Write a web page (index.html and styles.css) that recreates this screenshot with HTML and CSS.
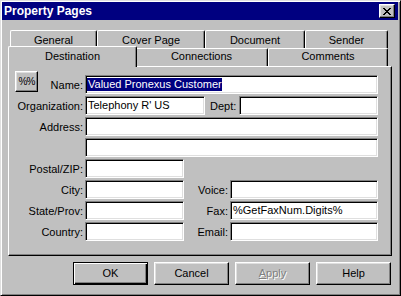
FILE: index.html
```html
<!DOCTYPE html>
<html lang="en">
  <head>
    <meta charset="UTF-8" />
    <meta name="viewport" content="width=device-width, initial-scale=1.0" />
    <title>Property Pages</title>
    <link rel="stylesheet" href="styles.css">
  </head>
  <body>
    <div class="window">
      <div class="titlebar">
        <span class="title">Property Pages</span>
        <button type="button" class="close">
          <svg width="8" height="7" viewBox="0 0 8 7">
            <path fill="#000" d="M0 0h2v1H0z M6 0h2v1H6z M1 1h2v1H1z M5 1h2v1H5z M2 2h4v1H2z M3 3h2v1H3z M2 4h4v1H2z M1 5h2v1H1z M5 5h2v1H5z M0 6h2v1H0z M6 6h2v1H6z" />
          </svg>
        </button>
      </div>

      <div class="tabs">
        <div class="tab_row tab_row_back">
          <div class="tab">General</div>
          <div class="tab">Cover Page</div>
          <div class="tab">Document</div>
          <div class="tab">Sender</div>
        </div>
        <div class="tab_row tab_row_front">
          <div class="tab tab_active">Destination</div>
          <div class="tab">Connections</div>
          <div class="tab">Comments</div>
        </div>
      </div>

      <div class="panel">
        <div class="form">
          <div class="row">
            <button type="button" class="macro">%%</button>
            <span class="label label_name">Name:</span>
            <div class="field"><span class="selected">Valued Pronexus Customer</span></div>
          </div>
          <div class="row">
            <span class="label">Organization:</span>
            <div class="field field_org">Telephony R' US</div>
            <span class="label_dept">Dept:</span>
            <div class="field"></div>
          </div>
          <div class="row">
            <span class="label">Address:</span>
            <div class="field"></div>
          </div>
          <div class="row">
            <span class="label"></span>
            <div class="field"></div>
          </div>
          <div class="row">
            <span class="label">Postal/ZIP:</span>
            <div class="field field_small"></div>
          </div>
          <div class="row">
            <span class="label">City:</span>
            <div class="field field_small"></div>
            <span class="label_right">Voice:</span>
            <div class="field"></div>
          </div>
          <div class="row">
            <span class="label">State/Prov:</span>
            <div class="field field_small"></div>
            <span class="label_right">Fax:</span>
            <div class="field">%GetFaxNum.Digits%</div>
          </div>
          <div class="row">
            <span class="label">Country:</span>
            <div class="field field_small"></div>
            <span class="label_right">Email:</span>
            <div class="field"></div>
          </div>
        </div>
      </div>

      <div class="buttons">
        <button type="button" class="btn btn_default">OK</button>
        <button type="button" class="btn">Cancel</button>
        <button type="button" class="btn btn_disabled"><u>A</u>pply</button>
        <button type="button" class="btn">Help</button>
      </div>
    </div>
  </body>
</html>
```

FILE: styles.css
```css
* {
  box-sizing: border-box;
}
body {
  margin: 0;
  background: #c0c0c0;
  font-family: "Liberation Sans", Arial, sans-serif;
  font-size: 11px;
  color: #000;
}
button {
  font: inherit;
  color: inherit;
  margin: 0;
  padding: 0;
}
.window {
  width: 401px;
  height: 296px;
  background: #c0c0c0;
  border: 1px solid;
  border-color: #dfdfdf #000 #000 #dfdfdf;
  box-shadow: inset 1px 1px #fff, inset -1px -1px #808080;
  padding: 1px;
}

/* title bar */
.titlebar {
  height: 18px;
  margin-right: 1px;
  padding: 0 3px 0 2px;
  background: #000080;
  color: #fff;
  display: flex;
  align-items: center;
  justify-content: space-between;
}
.title {
  font-size: 12px;
  font-weight: bold;
}
.close {
  width: 16px;
  height: 14px;
  display: flex;
  align-items: center;
  justify-content: center;
  padding-right: 1px;
  background: #c0c0c0;
  border: 1px solid;
  border-color: #fff #000 #000 #fff;
  box-shadow: inset -1px -1px #808080, inset 1px 1px #dfdfdf;
}
.close svg {
  shape-rendering: crispEdges;
}

/* tabs */
.tabs {
  margin: 10px 0 0 8px;
  width: 378px;
}
.tab_row {
  display: grid;
  height: 18px;
}
.tab_row_back {
  grid-template-columns: 87px 108px 100px 83px;
}
.tab_row_front {
  grid-template-columns: 125px 133px 120px;
}
.tab {
  background: #c0c0c0;
  border-top: 1px solid #fff;
  border-left: 1px solid #fff;
  border-right: 1px solid #000;
  border-top-left-radius: 2px;
  border-top-right-radius: 2px;
  box-shadow: inset -1px 0 #808080;
  text-align: center;
  line-height: 13px;
  padding-top: 3px;
  white-space: nowrap;
}
.tab_row_front .tab {
  padding-top: 1px;
}
.tab_row_front .tab_active {
  position: relative;
  z-index: 1;
  margin: -2px -2px -1px;
  padding-top: 3px;
}

/* page */
.panel {
  margin-left: 6px;
  width: 384px;
  height: 190px;
  border: 1px solid;
  border-color: #fff #000 #000 #fff;
  box-shadow: inset -1px -1px #808080;
}
.form {
  display: flex;
  flex-direction: column;
  gap: 2px;
  padding: 8px 13px 0 0;
}
.row {
  display: flex;
  align-items: center;
  height: 19px;
}
.label {
  flex: none;
  width: 74px;
  margin-right: 2px;
  text-align: right;
  line-height: 13px;
  padding-top: 2px;
  white-space: nowrap;
}
.label_name {
  width: 45px;
}
.label_dept {
  flex: none;
  margin: 0 3px 0 5px;
  line-height: 13px;
  padding-top: 2px;
}
.label_right {
  flex: none;
  width: 44px;
  margin-right: 2px;
  text-align: right;
  line-height: 13px;
  padding-top: 2px;
}
.macro {
  flex: none;
  align-self: flex-start;
  width: 23px;
  height: 21px;
  margin: -4px 0 0 6px;
  font-size: 10px;
  letter-spacing: -1px;
  background: #c0c0c0;
  border: 1px solid;
  border-color: #fff #000 #000 #fff;
  box-shadow: inset -1px -1px #808080, inset 1px 1px #dfdfdf;
}
.field {
  flex: 1;
  height: 19px;
  background: #fff;
  border: 1px solid;
  border-color: #808080 #fff #fff #808080;
  box-shadow: inset 1px 1px #000, inset -1px -1px #dfdfdf;
  padding: 2px 2px 0;
  line-height: 13px;
  white-space: nowrap;
  overflow: hidden;
}
.field_org {
  flex: none;
  width: 120px;
}
.field_small {
  flex: none;
  width: 99px;
}
.selected {
  display: inline-block;
  margin-left: -1px;
  padding-left: 1px;
  background: #000080;
  color: #fff;
}

/* buttons */
.buttons {
  display: flex;
  justify-content: flex-end;
  gap: 6px;
  margin: 6px 0 0 6px;
  width: 383px;
}
.btn {
  width: 75px;
  height: 23px;
  background: #c0c0c0;
  border: 1px solid;
  border-color: #fff #000 #000 #fff;
  box-shadow: inset -1px -1px #808080, inset 1px 1px #dfdfdf;
  line-height: 13px;
}
.btn_default {
  border-color: #000;
  box-shadow: inset 1px 1px #fff, inset -1px -1px #000, inset -2px -2px #808080;
}
.btn_disabled {
  color: #808080;
  text-shadow: 1px 1px #fff;
}
```
